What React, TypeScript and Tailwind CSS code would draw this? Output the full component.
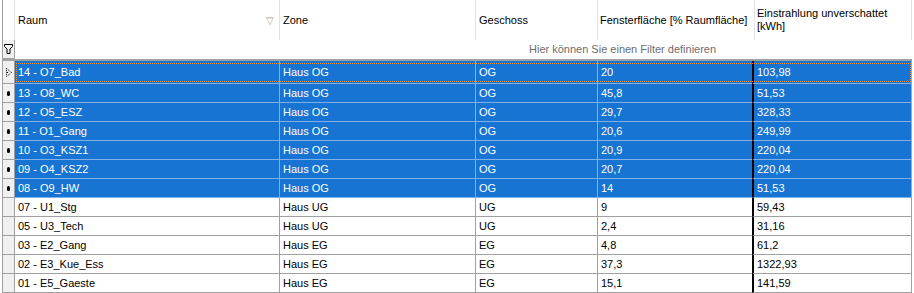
/**
 * RoomGrid
 * Windows-style data grid listing rooms with window area and irradiation
 */

// =============================================================================
// Data
// =============================================================================

interface RoomRow {
  raum: string;
  zone: string;
  geschoss: string;
  fenster: string;
  einstrahlung: string;
  selected: boolean;
}

const rows: RoomRow[] = [
  { raum: "14 - O7_Bad", zone: "Haus OG", geschoss: "OG", fenster: "20", einstrahlung: "103,98", selected: true },
  { raum: "13 - O8_WC", zone: "Haus OG", geschoss: "OG", fenster: "45,8", einstrahlung: "51,53", selected: true },
  { raum: "12 - O5_ESZ", zone: "Haus OG", geschoss: "OG", fenster: "29,7", einstrahlung: "328,33", selected: true },
  { raum: "11 - O1_Gang", zone: "Haus OG", geschoss: "OG", fenster: "20,6", einstrahlung: "249,99", selected: true },
  { raum: "10 - O3_KSZ1", zone: "Haus OG", geschoss: "OG", fenster: "20,9", einstrahlung: "220,04", selected: true },
  { raum: "09 - O4_KSZ2", zone: "Haus OG", geschoss: "OG", fenster: "20,7", einstrahlung: "220,04", selected: true },
  { raum: "08 - O9_HW", zone: "Haus OG", geschoss: "OG", fenster: "14", einstrahlung: "51,53", selected: true },
  { raum: "07 - U1_Stg", zone: "Haus UG", geschoss: "UG", fenster: "9", einstrahlung: "59,43", selected: false },
  { raum: "05 - U3_Tech", zone: "Haus UG", geschoss: "UG", fenster: "2,4", einstrahlung: "31,16", selected: false },
  { raum: "03 - E2_Gang", zone: "Haus EG", geschoss: "EG", fenster: "4,8", einstrahlung: "61,2", selected: false },
  { raum: "02 - E3_Kue_Ess", zone: "Haus EG", geschoss: "EG", fenster: "37,3", einstrahlung: "1322,93", selected: false },
  { raum: "01 - E5_Gaeste", zone: "Haus EG", geschoss: "EG", fenster: "15,1", einstrahlung: "141,59", selected: false },
];

// =============================================================================
// Icons
// =============================================================================

function FilterIcon() {
  return (
    <svg width="9" height="10" viewBox="0 0 9 10" className="block">
      <path
        d="M0.5 0.5 H8.5 V2.5 L6 5 V9.5 H3 V5 L0.5 2.5 Z"
        fill="none"
        stroke="#000"
        strokeWidth="1"
      />
    </svg>
  );
}

function ActiveRowIcon() {
  return (
    <svg width="6" height="9" viewBox="0 0 6 9" className="block">
      <path d="M0.5 0.5 L5.5 4.5 L0.5 8.5 Z" fill="none" stroke="#000" strokeWidth="1" strokeDasharray="1 1" />
      <rect x="1" y="4" width="1" height="1" fill="#000" />
    </svg>
  );
}

function SelectedDot() {
  return <div className="w-[3px] h-[5px] rounded-full bg-black" />;
}

// =============================================================================
// Header
// =============================================================================

function GridHeader() {
  return (
    <div className="flex h-[40px] bg-white text-black">
      <div className="w-[12px] border-r border-[#e3e3e3]" />
      <div className="w-[265px] flex items-center justify-between pl-[3px] pr-[5px] border-r border-[#e3e3e3]">
        <span>Raum</span>
        <span className="text-[#9a9a9a] text-[10px]">▽</span>
      </div>
      <div className="w-[196px] flex items-center pl-[3px] border-r border-[#e3e3e3]">Zone</div>
      <div className="w-[122px] flex items-center pl-[3px] border-r border-[#e3e3e3]">Geschoss</div>
      <div className="w-[157px] flex items-center pl-[2px] border-r border-[#e3e3e3]">
        Fensterfläche [% Raumfläche]
      </div>
      <div className="w-[157px] flex items-center pl-[2px] border-r border-[#e3e3e3] leading-[13px]">
        Einstrahlung unverschattet
        <br />
        [kWh]
      </div>
    </div>
  );
}

// =============================================================================
// Filter Row
// =============================================================================

function FilterRow() {
  return (
    <div className="flex h-[19px] bg-white">
      <div className="w-[12px] bg-[#f0f0f0] border-r border-b border-[#a0a0a0] flex items-center justify-center">
        <FilterIcon />
      </div>
      <div className="flex-1 flex items-center pl-[514px] text-[#6d6d6d]">
        Hier können Sie einen Filter definieren
      </div>
    </div>
  );
}

// =============================================================================
// Data Row
// =============================================================================

interface DataRowProps {
  row: RoomRow;
  first: boolean;
}

function DataRow({ row, first }: DataRowProps) {
  const line = row.selected ? "border-[#7fb0e6]" : "border-[#a0a0a0]";
  const cell = `flex items-center pl-[3px] border-b ${line}`;

  return (
    <div className={`flex ${first ? "h-[23px]" : "h-[19px]"}`}>
      <div className="w-[12px] bg-[#f0f0f0] border-r border-b border-[#a0a0a0] flex items-center justify-center">
        {first ? <ActiveRowIcon /> : row.selected ? <SelectedDot /> : null}
      </div>
      <div
        className={`relative flex ${row.selected ? "bg-[#1874d2] text-white" : "bg-white text-black"}`}
      >
        {first && (
          <div className="absolute left-[1px] right-[1px] top-[2px] bottom-[2px] border border-dotted border-[#f0902a] pointer-events-none" />
        )}
        <div className={`w-[265px] border-r ${cell}`}>{row.raum}</div>
        <div className={`w-[196px] border-r ${cell}`}>{row.zone}</div>
        <div className={`w-[122px] border-r ${cell}`}>{row.geschoss}</div>
        <div className={`w-[154px] ${cell}`}>{row.fenster}</div>
        <div className={`w-[160px] border-l-2 border-l-black border-r ${cell}`}>
          {row.einstrahlung}
        </div>
      </div>
    </div>
  );
}

// =============================================================================
// App
// =============================================================================

export default function App() {
  return (
    <div
      className="w-[914px] h-[293px] bg-white overflow-hidden text-[11px] leading-[13px]"
      style={{ fontFamily: '"Liberation Sans", Arial, sans-serif' }}
    >
      <div className="ml-[2px] w-[910px] border-l border-[#a0a0a0]">
        <GridHeader />
        <FilterRow />
        <div className="h-[2px] bg-[#a0a0a0]" />
        {rows.map((row, index) => (
          <DataRow key={index} row={row} first={index === 0} />
        ))}
      </div>
    </div>
  );
}
